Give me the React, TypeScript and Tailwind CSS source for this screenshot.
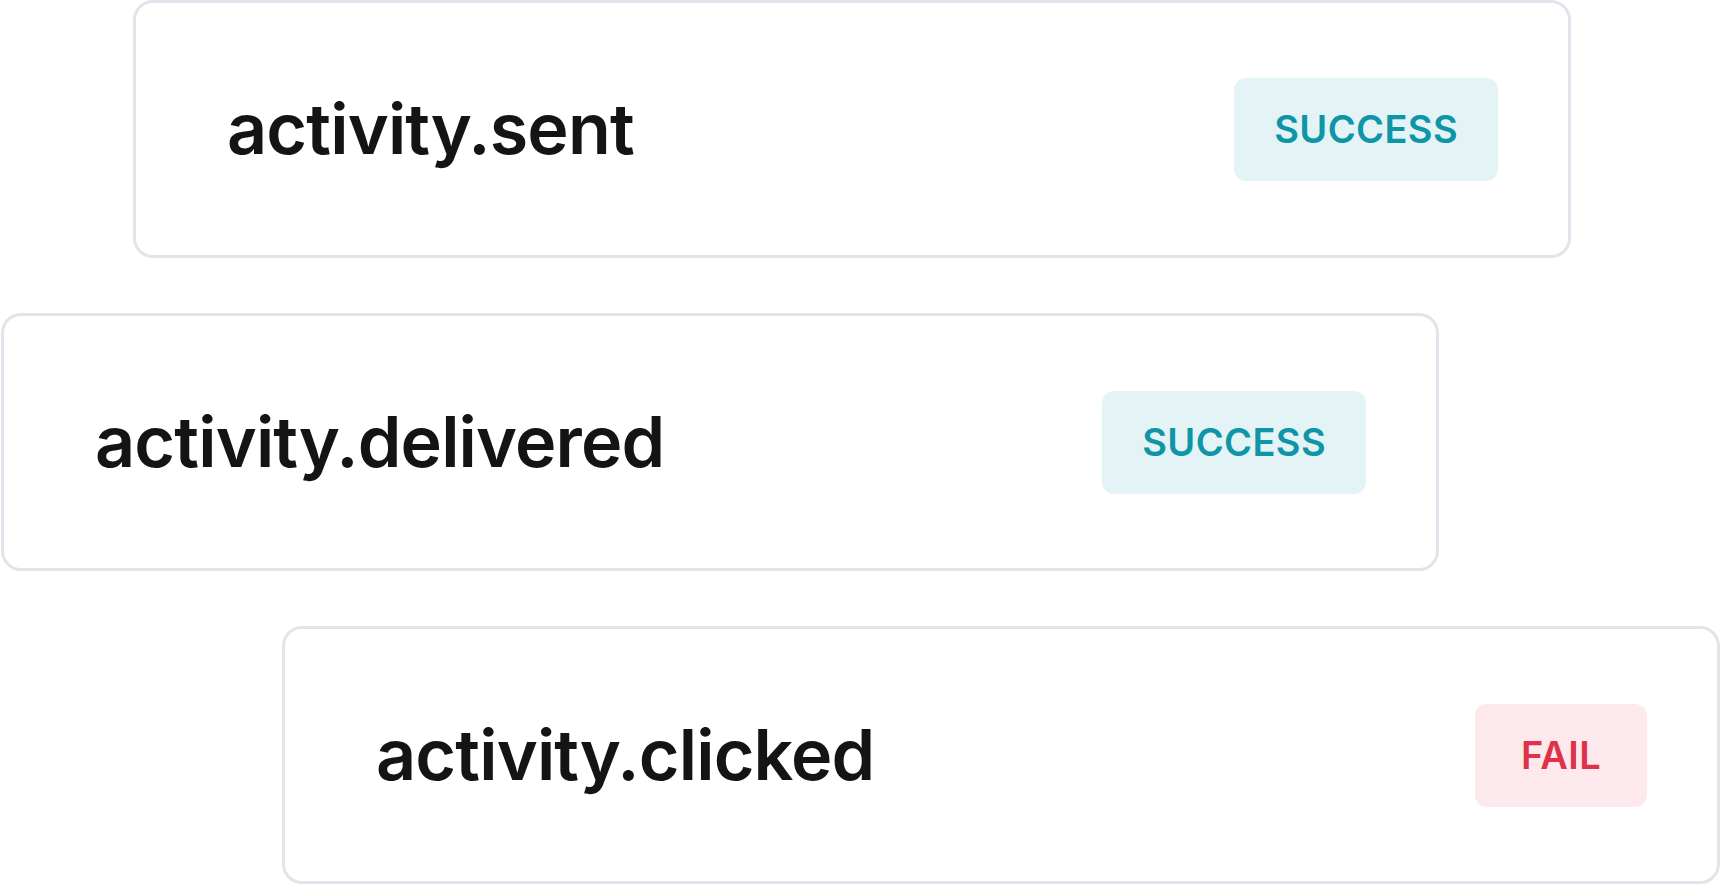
import React from 'react';

type Status = 'success' | 'fail';

interface EventRow {
    name: string;
    status: Status;
    offset: string;
}

const events: EventRow[] = [
    { name: 'activity.sent', status: 'success', offset: 'ml-[133px]' },
    { name: 'activity.delivered', status: 'success', offset: 'ml-[1px]' },
    { name: 'activity.clicked', status: 'fail', offset: 'ml-[282px]' },
];

const StatusBadge: React.FC<{ status: Status }> = ({ status }) => {
    const isSuccess = status === 'success';
    return (
        <div
            className={
                isSuccess
                    ? 'flex h-[103px] min-w-[172px] items-center justify-center rounded-xl bg-[#e3f3f6] px-[40px] text-[38px] font-semibold tracking-[0.01em] text-[#0e95a6]'
                    : 'flex h-[103px] min-w-[172px] items-center justify-center rounded-xl bg-[#fde8eb] px-[40px] text-[38px] font-semibold tracking-[0.01em] text-[#e0314a]'
            }
        >
            {isSuccess ? 'SUCCESS' : 'FAIL'}
        </div>
    );
};

const EventCard: React.FC<{ event: EventRow }> = ({ event }) => (
    <div
        className={`${event.offset} flex h-[258px] w-[1438px] shrink-0 items-center justify-between rounded-[20px] border-[3px] border-[#e1e5eb] bg-white pl-[91px] pr-[70px]`}
    >
        <span className="text-[70px] leading-none font-semibold tracking-[-0.012em] text-[#141414]">
            {event.name}
        </span>
        <StatusBadge status={event.status} />
    </div>
);

export default function App() {
    return (
        <div
            className="flex min-h-screen w-full flex-col gap-[55px] overflow-hidden bg-white"
            style={{ fontFamily: 'Inter, "Noto Sans", sans-serif' }}
        >
            {events.map((event) => (
                <EventCard key={event.name} event={event} />
            ))}
        </div>
    );
}
